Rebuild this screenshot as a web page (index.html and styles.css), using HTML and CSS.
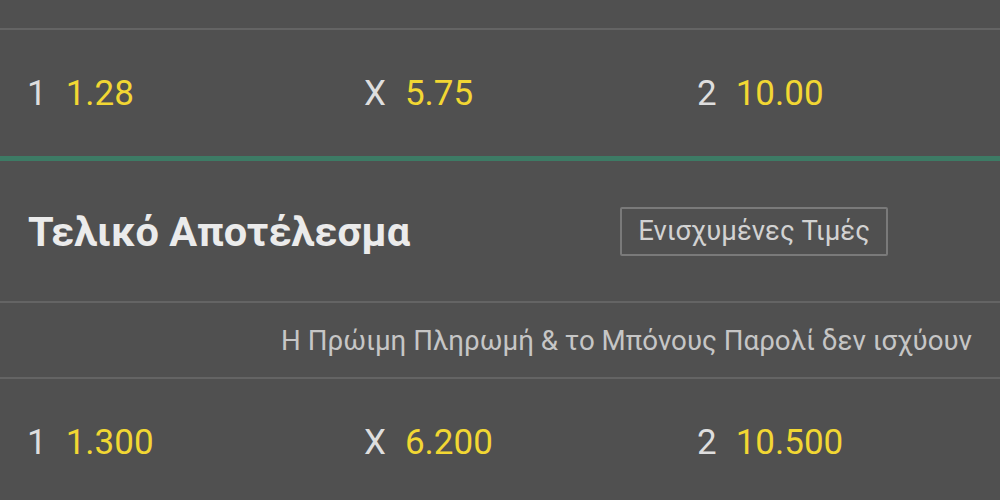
FILE: index.html
```html
<!DOCTYPE html>
<html lang="el">
<head>
<meta charset="utf-8">
<title>Τελικό Αποτέλεσμα</title>
<link rel="stylesheet" href="styles.css">
</head>
<body>
<div class="page">
  <div class="top-strip"></div>
  <div class="odds-row">
    <div class="odd"><span class="label">1</span><span class="price">1.28</span></div>
    <div class="odd"><span class="label">X</span><span class="price">5.75</span></div>
    <div class="odd"><span class="label">2</span><span class="price">10.00</span></div>
  </div>
  <div class="market-divider"></div>
  <div class="market-header">
    <h2 class="market-title">Τελικό Αποτέλεσμα</h2>
    <button class="boost-btn">Ενισχυμένες Τιμές</button>
  </div>
  <div class="notice">Η Πρώιμη Πληρωμή &amp; το Μπόνους Παρολί δεν ισχύουν</div>
  <div class="odds-row">
    <div class="odd"><span class="label">1</span><span class="price">1.300</span></div>
    <div class="odd"><span class="label">X</span><span class="price">6.200</span></div>
    <div class="odd"><span class="label">2</span><span class="price">10.500</span></div>
  </div>
</div>
</body>
</html>
```
FILE: styles.css
```css
html, body {
  margin: 0;
  padding: 0;
  background: #505050;
}
body {
  font-family: Roboto, "Noto Sans", "DejaVu Sans", sans-serif;
  color: #dcdcdc;
  overflow: hidden;
}
.page {
  width: 1000px;
  height: 500px;
  overflow: hidden;
  display: flex;
  flex-direction: column;
}
.top-strip {
  height: 28px;
  flex: 0 0 auto;
  border-bottom: 2px solid #646464;
}
.odds-row {
  flex: 0 0 auto;
  height: 126px;
  display: grid;
  grid-template-columns: 337px 333px 1fr;
  align-items: center;
  padding-left: 27px;
}
.odd {
  display: flex;
  align-items: baseline;
  gap: 19px;
  font-size: 35px;
}
.label {
  color: #dedede;
}
.price {
  color: #f2d733;
}
.market-divider {
  flex: 0 0 auto;
  height: 5px;
  background: #3d7b65;
}
.market-header {
  flex: 0 0 auto;
  height: 142px;
  box-sizing: border-box;
  border-bottom: 2px solid #646464;
  display: flex;
  align-items: center;
  padding: 0 28px;
}
.market-title {
  margin: 0;
  font-size: 41.5px;
  font-weight: 700;
  color: #ebebeb;
}
.boost-btn {
  margin-left: auto;
  margin-right: 84px;
  font-family: inherit;
  font-size: 27.5px;
  color: #d2d2d2;
  background: transparent;
  border: 2px solid #7a7a7a;
  border-radius: 2px;
  height: 49px;
  padding: 0 16px;
  line-height: 1;
}
.notice {
  flex: 0 0 auto;
  height: 76px;
  box-sizing: border-box;
  border-bottom: 2px solid #646464;
  display: flex;
  align-items: center;
  justify-content: flex-end;
  padding-right: 28px;
  font-size: 27.7px;
  color: #c6c6c6;
}
```
